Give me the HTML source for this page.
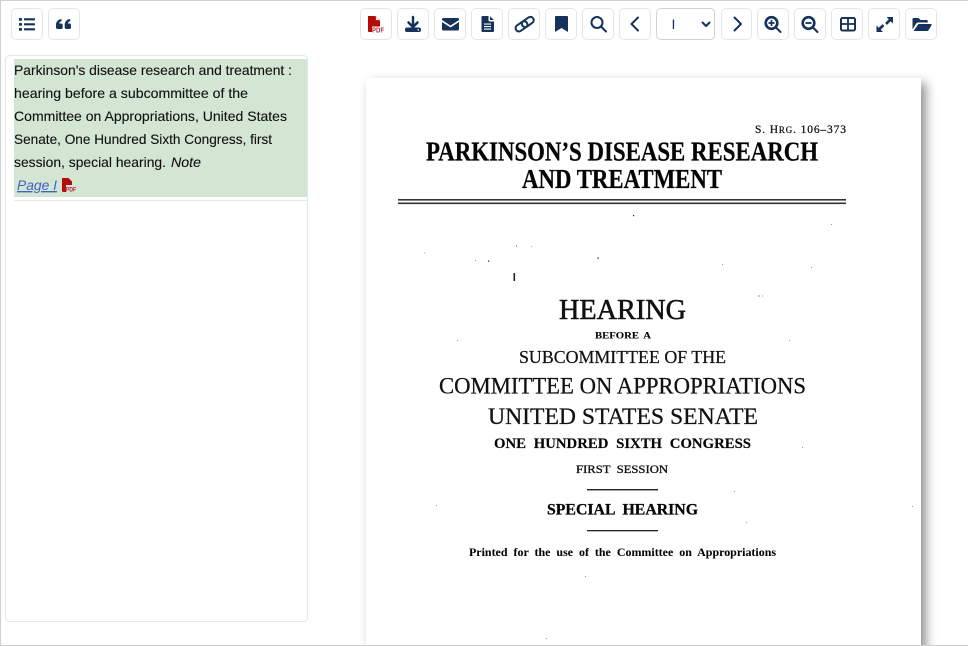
<!DOCTYPE html>
<html><head><meta charset="utf-8"><style>
html,body{margin:0;padding:0;background:#fff;width:968px;height:646px;overflow:hidden}
#wrap{position:relative;width:968px;height:646px;overflow:hidden;background:#fff}
svg{display:block;position:absolute;left:0;top:0}
#pg{position:absolute;left:366px;top:78px;width:555px;height:600px;background:#fff;box-shadow:5px 5px 10px rgba(0,0,0,.43)}
.b{fill:#fff;stroke:#e3e5e8;stroke-width:1}
.i{fill:#14325a}
.s{fill:none;stroke:#14325a;stroke-linecap:round;stroke-linejoin:round}
.t{font-family:"Liberation Sans",sans-serif;font-size:14px;fill:#111;stroke:#111;stroke-width:.12}
.p{font-family:"Liberation Serif",serif;fill:#111;stroke:#111;stroke-width:.25}
.pb{font-family:"Liberation Serif",serif;fill:#050505;font-weight:bold;stroke:#050505;stroke-width:.25}
</style></head><body>
<div id="wrap">
<div id="pg"></div>
<svg width="968" height="646" viewBox="0 0 968 646" xmlns="http://www.w3.org/2000/svg">
<rect x="0" y="0" width="968" height="1" fill="#cfcfcf"/>
<rect x="0" y="0" width="1" height="646" fill="#cfcfcf"/>
<rect x="0" y="645" width="968" height="1" fill="#cfcfcf"/>

<!-- left panel -->
<rect x="5.5" y="55.5" width="302" height="566" rx="4" fill="#fff" stroke="#e6e6e6"/>
<rect x="14" y="59" width="293" height="138" fill="#d3e6d3"/>
<rect x="14" y="200" width="293" height="1" fill="#e9e9e9"/>
<text class="t" x="14" y="75" textLength="278" lengthAdjust="spacingAndGlyphs">Parkinson's disease research and treatment :</text>
<text class="t" x="14" y="98" textLength="234" lengthAdjust="spacingAndGlyphs">hearing before a subcommittee of the</text>
<text class="t" x="14" y="121" textLength="273" lengthAdjust="spacingAndGlyphs">Committee on Appropriations, United States</text>
<text class="t" x="14" y="144" textLength="258" lengthAdjust="spacingAndGlyphs">Senate, One Hundred Sixth Congress, first</text>
<text class="t" x="14" y="167" textLength="152" lengthAdjust="spacingAndGlyphs">session, special hearing.</text>
<text class="t" x="171" y="167" textLength="30" lengthAdjust="spacingAndGlyphs" font-style="italic">Note</text>
<text class="t" x="17" y="190" textLength="40" lengthAdjust="spacingAndGlyphs" font-style="italic" style="fill:#3f63c4;stroke:none" text-decoration="underline">Page I</text>
<path d="M62 178h6.500l3.500 3.500v3.500h-6v7h-3a1 1 0 0 1-1-1z" fill="#b50d0d"/>
<text x="66" y="191.500" font-family="Liberation Sans,sans-serif" font-size="6" font-weight="bold" fill="#b5263a" textLength="10" lengthAdjust="spacingAndGlyphs">PDF</text>

<!-- document page -->
<text class="p" x="755" y="133" font-size="11.500" textLength="91" lengthAdjust="spacing">S. H<tspan font-size="9">RG</tspan>. 106–373</text>
<text class="pb" x="426" y="160.500" font-size="27" textLength="392" lengthAdjust="spacingAndGlyphs">PARKINSON’S DISEASE RESEARCH</text>
<text class="pb" x="522" y="188" font-size="27" textLength="200" lengthAdjust="spacingAndGlyphs">AND TREATMENT</text>
<rect x="398" y="199" width="448" height="1.600" fill="#333"/>
<rect x="398" y="202.500" width="448" height="1.600" fill="#333"/>
<text class="p" x="559" y="319" font-size="28" textLength="127" lengthAdjust="spacingAndGlyphs" style="stroke-width:.55">HEARING</text>
<text class="pb" x="595" y="338.500" font-size="9.500" textLength="56" lengthAdjust="spacingAndGlyphs" style="word-spacing:2px;stroke-width:.1">BEFORE A</text>
<text class="p" x="519" y="363" font-size="18" textLength="207" lengthAdjust="spacingAndGlyphs">SUBCOMMITTEE OF THE</text>
<text class="p" x="439" y="393.500" font-size="23" textLength="367" lengthAdjust="spacingAndGlyphs">COMMITTEE ON APPROPRIATIONS</text>
<text class="p" x="488" y="424" font-size="23" textLength="270" lengthAdjust="spacingAndGlyphs">UNITED STATES SENATE</text>
<text class="pb" x="494" y="448" font-size="14.500" textLength="257" lengthAdjust="spacingAndGlyphs" style="word-spacing:4px;stroke-width:.15">ONE HUNDRED SIXTH CONGRESS</text>
<text class="p" x="576" y="473" font-size="12" textLength="92" lengthAdjust="spacingAndGlyphs" style="stroke-width:.35;word-spacing:3px">FIRST SESSION</text>
<rect x="587" y="489" width="71" height="1.400" fill="#222"/>
<text class="pb" x="547" y="514.500" font-size="16" textLength="151" lengthAdjust="spacingAndGlyphs" style="stroke-width:.3;word-spacing:4px">SPECIAL HEARING</text>
<rect x="587" y="530" width="71" height="1.300" fill="#222"/>
<text class="pb" x="469" y="556" font-size="12" textLength="307" lengthAdjust="spacingAndGlyphs" style="stroke-width:.05;word-spacing:3px">Printed for the use of the Committee on Appropriations</text>

<!-- specks -->
<g fill="#222">
<rect x="513.500" y="273" width="1.600" height="8"/>
<rect x="633" y="215" width="1.200" height="1.200"/>
<rect x="488" y="260.500" width="1.200" height="1.200"/>
<rect x="597.500" y="257.500" width="1.300" height="1.300"/>
<rect x="516" y="245.500" width=".9" height=".9"/>
</g>
<g fill="#999">
<rect x="424" y="252.500" width="1.400" height=".8"/><rect x="531" y="246" width=".9" height=".9"/>
<rect x="722" y="264" width="1" height="1"/><rect x="811" y="267" width="1" height="1"/>
<rect x="758" y="295.500" width="2" height="1"/><rect x="762" y="295.500" width="1" height="1"/>
<rect x="457" y="340" width="1" height="1"/><rect x="789" y="340" width="1" height="1"/>
<rect x="802" y="447" width="1" height="1"/><rect x="436" y="505" width="1" height="1"/>
<rect x="912" y="506" width="1" height="1"/><rect x="746" y="522" width="1" height="1"/>
<rect x="734" y="491" width="1" height="1"/><rect x="585" y="576" width="1" height="1"/>
<rect x="546" y="638" width="1" height="1"/>
<rect x="475" y="260" width="1" height="1"/><rect x="831" y="224" width="1" height="1"/>
</g>

<!-- button frames -->
<g class="b">
<rect x="11.500" y="8.500" width="31" height="31" rx="4.500"/><rect x="48.500" y="8.500" width="31" height="31" rx="4.500"/>
<rect x="360.500" y="8.500" width="31" height="31" rx="4.500"/><rect x="397.500" y="8.500" width="31" height="31" rx="4.500"/>
<rect x="434.500" y="8.500" width="31" height="31" rx="4.500"/><rect x="471.500" y="8.500" width="31" height="31" rx="4.500"/>
<rect x="508.500" y="8.500" width="31" height="31" rx="4.500"/><rect x="545.500" y="8.500" width="31" height="31" rx="4.500"/>
<rect x="582.500" y="8.500" width="31" height="31" rx="4.500"/><rect x="619.500" y="8.500" width="31" height="31" rx="4.500"/>
<rect x="721.500" y="8.500" width="30" height="31" rx="4.500"/><rect x="757.500" y="8.500" width="31" height="31" rx="4.500"/>
<rect x="794.500" y="8.500" width="31" height="31" rx="4.500"/><rect x="831.500" y="8.500" width="31" height="31" rx="4.500"/>
<rect x="868.500" y="8.500" width="31" height="31" rx="4.500"/><rect x="905.500" y="8.500" width="31" height="31" rx="4.500"/>
</g>
<rect x="656.500" y="8.500" width="58" height="31" rx="4.500" fill="#fff" stroke="#ced4da"/>
<text x="671.500" y="29" font-family="Liberation Sans,sans-serif" font-size="14" fill="#14325a">I</text>
<path class="s" stroke-width="2" d="M702.500 22.500l3.500 3.500 3.500-3.500"/>

<!-- list -->
<g class="i"><rect x="19" y="18" width="3" height="2.800" rx=".7"/><rect x="19" y="23" width="3" height="2.800" rx=".7"/><rect x="19" y="28" width="3" height="2.800" rx=".7"/>
<rect x="24" y="18.200" width="11" height="2.200" rx=".5"/><rect x="24" y="23.200" width="11" height="2.200" rx=".5"/><rect x="24" y="28.200" width="11" height="2.200" rx=".5"/></g>
<!-- quote -->
<path class="i" d="M56 25c0-3.300 2-5.600 5.500-6v2.300c-1.400.3-2.200 1-2.300 2.200h1.800q1.700 0 1.700 1.700v2.100q0 1.700-1.700 1.700h-3.300q-1.700 0-1.700-1.700zM64.700 25c0-3.300 2-5.600 5.500-6v2.300c-1.400.3-2.200 1-2.300 2.200h1.400q1.700 0 1.700 1.700v2.100q0 1.700-1.700 1.700h-2.900q-1.700 0-1.700-1.700z"/>
<!-- pdf -->
<path d="M368 16h7l5 5v5.500h-8v5.500h-3a1 1 0 0 1-1-1z" fill="#b30b00"/>
<path d="M375.800 16.200l4 4h-4z" fill="#fff" stroke="#b30b00" stroke-width=".3"/>
<text x="372" y="32.500" font-family="Liberation Sans,sans-serif" font-size="7.500" font-weight="bold" fill="#a8324f" textLength="12" lengthAdjust="spacingAndGlyphs">PDF</text>
<!-- download -->
<path class="s" stroke-width="2.500" fill="none" d="M413 17v10M408.500 22.500l4.500 4.500 4.500-4.500"/>
<rect x="405" y="27.500" width="16" height="4.500" rx="2" class="i"/>
<circle cx="418.300" cy="29.800" r=".8" fill="#fff"/>
<!-- envelope -->
<path class="i" d="M443.500 18h14a1.500 1.500 0 0 1 1.500 1.500v.5l-8.500 5.500-8.500-5.500v-.5a1.500 1.500 0 0 1 1.500-1.500z"/>
<path class="i" d="M442 22l8.500 5.500 8.500-5.500v7a1.500 1.500 0 0 1-1.500 1.500h-14A1.500 1.500 0 0 1 442 29z"/>
<!-- file-alt -->
<path class="i" d="M482.500 16h6v4.500a1 1 0 0 0 1 1h4.500V31a1 1 0 0 1-1 1h-10.500a1 1 0 0 1-1-1V17a1 1 0 0 1 1-1zM490 16.200l3.800 3.800H490z"/>
<g fill="#fff"><rect x="484" y="23.500" width="7" height="1.100"/><rect x="484" y="26" width="7" height="1.100"/><rect x="484" y="28.500" width="7" height="1.100"/></g>
<!-- link -->
<g fill="none" stroke="#14325a" stroke-width="2">
<rect x="-6.500" y="-3.300" width="13" height="6.600" rx="3.300" transform="translate(521.500 26.300) rotate(-35)"/>
<rect x="-6.500" y="-3.300" width="13" height="6.600" rx="3.300" transform="translate(527.800 22) rotate(-35)"/>
</g>
<!-- bookmark -->
<path class="i" d="M556 16h11a1 1 0 0 1 1 1v15l-6.500-4-6.500 4V17a1 1 0 0 1 1-1z"/>
<!-- search -->
<circle class="s" cx="597" cy="22.500" r="5.500" stroke-width="2"/><path class="s" stroke-width="2" d="M601.500 27l4.500 4.500"/>
<!-- chevrons -->
<path class="s" stroke-width="2" d="M638 17.500l-6.500 6.500 6.500 6.500"/>
<path class="s" stroke-width="2" d="M734.500 17.500l6.500 6.500-6.500 6.500"/>
<!-- zoom in -->
<circle cx="771.500" cy="23" r="5.800" fill="#fff" stroke="#14325a" stroke-width="2.600"/><path class="s" stroke-width="2" d="M776.500 28l4 4"/>
<path d="M768.500 23h6M771.500 20v6" stroke="#14325a" stroke-width="1.700" fill="none"/>
<!-- zoom out -->
<circle cx="808.500" cy="23" r="5.800" fill="#fff" stroke="#14325a" stroke-width="2.600"/><path class="s" stroke-width="2" d="M813.500 28l4 4"/>
<path d="M805.500 23h6" stroke="#14325a" stroke-width="1.800" fill="none"/>
<!-- table -->
<rect x="841" y="18" width="14" height="12.500" rx="1.500" fill="none" stroke="#14325a" stroke-width="2"/>
<path d="M848 18v12M841 24h14" stroke="#14325a" stroke-width="1.800" fill="none"/>
<!-- expand -->
<path class="i" d="M886.500 17h6.500v6.500l-2.300-2.300-3.700 3.700-1.900-1.900 3.700-3.700zM876.500 32v-6.500l2.300 2.300 3.700-3.700 1.900 1.900-3.700 3.700 2.300 2.300z"/>
<!-- folder open -->
<path class="i" d="M913.500 18h5l2 2h6a1.300 1.300 0 0 1 1.300 1.300V22.500H918q-1.300 0-2 1.300l-3.500 5.700V19a1 1 0 0 1 1-1z"/>
<path class="i" d="M918.500 24h12.300c.7 0 1.100.7.7 1.300l-3 5a1.600 1.600 0 0 1-1.300.7h-13.700z"/>
</svg>
</div>
</body></html>
